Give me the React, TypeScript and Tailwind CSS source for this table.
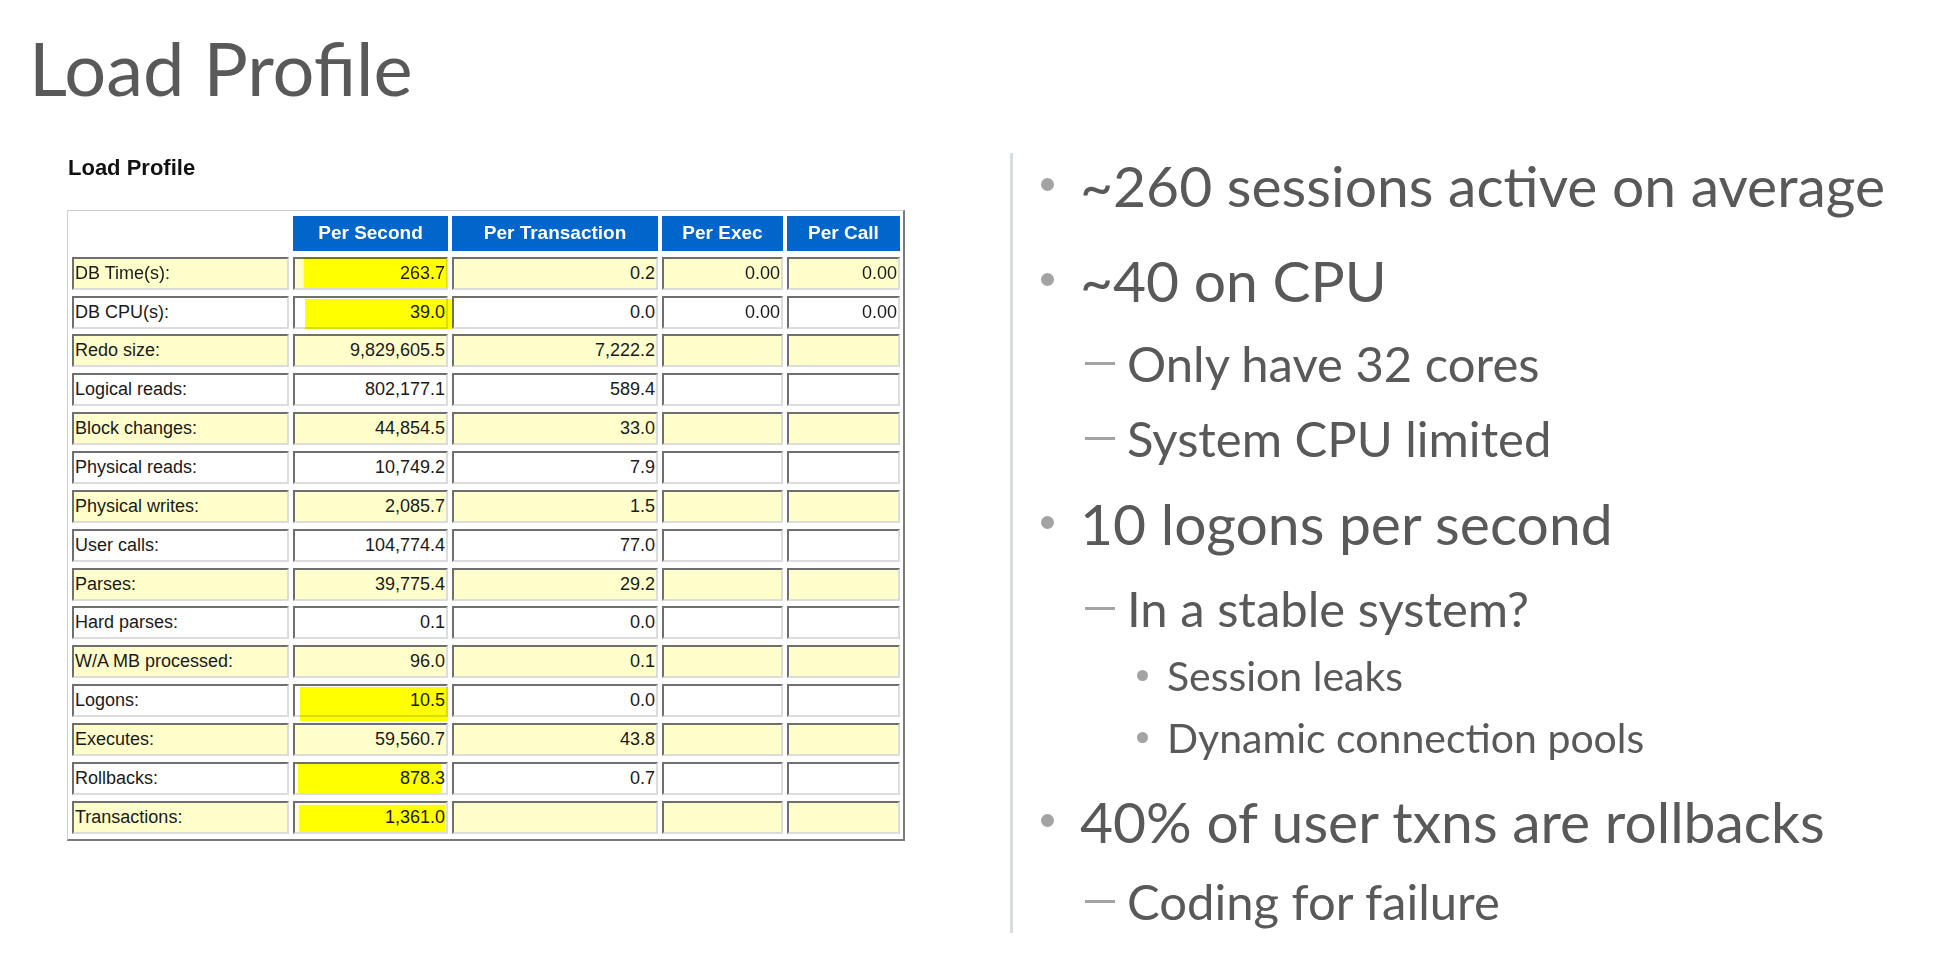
import React from 'react';

type Row = {
  label: string;
  sec: string;
  txn: string;
  exec?: string;
  call?: string;
  hl?: string;
};

// highlighter marks over the Per Second column
const rows: Row[] = [
  { label: 'DB Time(s):', sec: '263.7', txn: '0.2', exec: '0.00', call: '0.00', hl: 'left-[9px] -right-[1px] -top-[1px] bottom-0' },
  { label: 'DB CPU(s):', sec: '39.0', txn: '0.0', exec: '0.00', call: '0.00', hl: 'left-[10px] -right-[15px] top-[1px] -bottom-[2px]' },
  { label: 'Redo size:', sec: '9,829,605.5', txn: '7,222.2' },
  { label: 'Logical reads:', sec: '802,177.1', txn: '589.4' },
  { label: 'Block changes:', sec: '44,854.5', txn: '33.0' },
  { label: 'Physical reads:', sec: '10,749.2', txn: '7.9' },
  { label: 'Physical writes:', sec: '2,085.7', txn: '1.5' },
  { label: 'User calls:', sec: '104,774.4', txn: '77.0' },
  { label: 'Parses:', sec: '39,775.4', txn: '29.2' },
  { label: 'Hard parses:', sec: '0.1', txn: '0.0' },
  { label: 'W/A MB processed:', sec: '96.0', txn: '0.1' },
  { label: 'Logons:', sec: '10.5', txn: '0.0', hl: 'left-[5px] -right-[2px] top-[1px] -bottom-[6px]' },
  { label: 'Executes:', sec: '59,560.7', txn: '43.8' },
  { label: 'Rollbacks:', sec: '878.3', txn: '0.7', hl: 'left-[3px] right-[5px] top-0 bottom-0' },
  { label: 'Transactions:', sec: '1,361.0', txn: '', hl: 'left-[4px] right-[1px] top-[2px] bottom-0' },
];

const headers = ['Per Second', 'Per Transaction', 'Per Exec', 'Per Call'];

function Cell({ shaded, right, children, hl }: { shaded: boolean; right?: boolean; children?: React.ReactNode; hl?: string }) {
  return (
    <div
      className={`relative h-[33px] flex items-center border-2 border-t-[#6f6f6f] border-l-[#6f6f6f] border-b-[#dcdcdc] border-r-[#dcdcdc] ${
        shaded ? 'bg-[#ffffcc]' : 'bg-white'
      } ${right ? 'justify-end pr-[1px]' : 'justify-start pl-[1px]'}`}
    >
      <span className="whitespace-nowrap">{children}</span>
      {hl && <span className={`absolute ${hl} bg-[#ffff00] mix-blend-multiply`} />}
    </div>
  );
}

function Bullet({ level, children }: { level: 1 | 2 | 3; children: React.ReactNode }) {
  if (level === 1) {
    return (
      <div className="flex items-start text-[57px] leading-[1.2] whitespace-nowrap">
        <span className="ml-[28px] mt-[27px] mr-[26px] w-[13px] h-[13px] rounded-full bg-[#a3a3a3] shrink-0" />
        <span>{children}</span>
      </div>
    );
  }
  if (level === 2) {
    return (
      <div className="flex items-start text-[49px] leading-[1.2] whitespace-nowrap">
        <span className="ml-[72px] mt-[28px] mr-[12px] w-[30px] h-[3px] bg-[#a3a3a3] shrink-0" />
        <span>{children}</span>
      </div>
    );
  }
  return (
    <div className="flex items-start text-[41px] leading-[1.2] whitespace-nowrap">
      <span className="ml-[124px] mt-[19px] mr-[19px] w-[11px] h-[11px] rounded-full bg-[#a3a3a3] shrink-0" />
      <span>{children}</span>
    </div>
  );
}

export default function App() {
  return (
    <div className="w-[1952px] h-[954px] bg-white flex overflow-hidden">
      {/* Left: slide title + AWR table */}
      <div className="w-[1010px] shrink-0 flex flex-col">
        <h1 className="ml-[29px] mt-[24px] text-[74px] leading-[1.2] text-[#595959] font-['Lato',sans-serif]">
          Load Profile
        </h1>

        <h2 className="ml-[68px] mt-[44px] text-[22px] leading-none font-bold text-[#111] font-['Liberation_Sans',Arial,sans-serif]">
          Load Profile
        </h2>

        <div className="ml-[67px] mt-[31px] w-[838px] border-t border-l border-t-[#cfcfcf] border-l-[#cfcfcf] border-b-2 border-r-2 border-b-[#7b7b7b] border-r-[#7b7b7b] pt-[5px] pl-[4px] pr-[3px] pb-[5px] font-['Liberation_Sans',Arial,sans-serif] text-[18px] text-[#1a1a1a]">
          <div className="grid grid-cols-[217px_155px_206px_121px_113px] gap-x-[4px] gap-y-[5.86px]">
            <div className="h-[35px]" />
            {headers.map((h) => (
              <div key={h} className="h-[35px] bg-[#0066cc] text-white font-bold text-[19px] flex items-center justify-center">
                {h}
              </div>
            ))}

            {rows.map((r, i) => {
              const shaded = i % 2 === 0;
              return (
                <React.Fragment key={r.label}>
                  <Cell shaded={shaded}>{r.label}</Cell>
                  <Cell shaded={shaded} right hl={r.hl}>{r.sec}</Cell>
                  <Cell shaded={shaded} right>{r.txn}</Cell>
                  <Cell shaded={shaded} right>{r.exec}</Cell>
                  <Cell shaded={shaded} right>{r.call}</Cell>
                </React.Fragment>
              );
            })}
          </div>
        </div>
      </div>

      {/* Right: bullet notes */}
      <div className="mt-[153px] h-[780px] flex-1 border-l-[3px] border-[#d6dde0] flex flex-col text-[#595959] font-['Lato',sans-serif]">
        <div className="-mt-[2px]">
          <Bullet level={1}>~260 sessions active on average</Bullet>
        </div>
        <div className="mt-[26.6px]">
          <Bullet level={1}>~40 on CPU</Bullet>
        </div>
        <div className="mt-[19.5px]">
          <Bullet level={2}>Only have 32 cores</Bullet>
        </div>
        <div className="mt-[16.2px]">
          <Bullet level={2}>System CPU limited</Bullet>
        </div>
        <div className="mt-[21.3px]">
          <Bullet level={1}>10 logons per second</Bullet>
        </div>
        <div className="mt-[21.5px]">
          <Bullet level={2}>In a stable system?</Bullet>
        </div>
        <div className="mt-[13.1px]">
          <Bullet level={3}>Session leaks</Bullet>
        </div>
        <div className="mt-[12.8px]">
          <Bullet level={3}>Dynamic connection pools</Bullet>
        </div>
        <div className="mt-[25px]">
          <Bullet level={1}>40% of user txns are rollbacks</Bullet>
        </div>
        <div className="mt-[16.5px]">
          <Bullet level={2}>Coding for failure</Bullet>
        </div>
      </div>
    </div>
  );
}
